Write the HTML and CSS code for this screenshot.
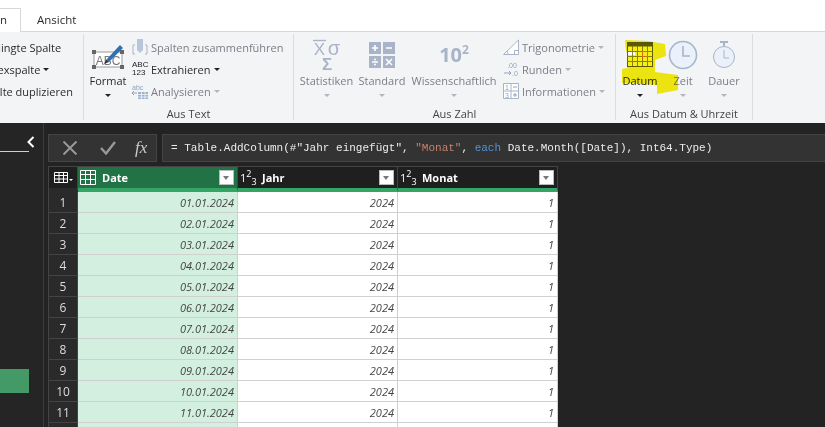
FILE: index.html
```html
<!DOCTYPE html>
<html lang="de">
<head>
    <meta charset="UTF-8">
    <meta name="viewport" content="width=device-width, initial-scale=1.0">
    <title>Power Query Editor</title>
    <link rel="stylesheet" href="styles.css">
</head>
<body>
    <div class="tabs">
        <div class="tab tab-active"><span>Spalte hinzufügen</span></div>
        <div class="tab">Ansicht</div>
    </div>

    <div class="ribbon">
        <!-- Allgemein, links abgeschnitten -->
        <div class="group group-general">
            <div class="group-body">
                <div class="small-list small-list-cut">
                    <div class="small-item">Bedingte Spalte</div>
                    <div class="small-item">Indexspalte <i class="caret"></i></div>
                    <div class="small-item">Spalte duplizieren</div>
                </div>
            </div>
        </div>

        <div class="group group-text">
            <div class="group-body">
                <div class="big-btn btn-format">
                    <div class="big-icon">
                        <svg width="32" height="28" viewBox="0 0 32 28">
                            <rect x="2" y="11" width="28" height="15" fill="#fff" stroke="#9a9a9a"/>
                            <rect x="0" y="9" width="4" height="4" fill="#666"/>
                            <rect x="28" y="9" width="4" height="4" fill="#666"/>
                            <rect x="0" y="24" width="4" height="4" fill="#666"/>
                            <rect x="28" y="24" width="4" height="4" fill="#666"/>
                            <text x="16" y="24" class="svg-abc">ABC</text>
                            <path d="M14 19 L28 4 L31 7 L17 21 Z" fill="#2f6fb5"/>
                            <path d="M14 19 L12 23 L17 21 Z" fill="#333"/>
                        </svg>
                    </div>
                    <div class="big-label">Format</div>
                    <i class="caret"></i>
                </div>
                <div class="small-list">
                    <div class="small-item dim">
                        <svg class="small-icon" width="16" height="16" viewBox="0 0 16 16">
                            <path d="M5 0h6v11l-3 3-3-3z" fill="#b9c6da"/>
                            <path d="M3 6H1v9h2M13 6h2v9h-2" fill="none" stroke="#a9b4c8"/>
                        </svg>
                        Spalten zusammenführen
                    </div>
                    <div class="small-item">
                        <span class="abc-icon">ABC<br>123</span>
                        Extrahieren <i class="caret"></i>
                    </div>
                    <div class="small-item dim">
                        <svg class="small-icon" width="16" height="16" viewBox="0 0 16 16">
                            <text x="0" y="7" class="svg-tiny">abc</text>
                            <path d="M0 10h5M2 8l-2 2 2 2" fill="none" stroke="#8fa3bd"/>
                            <path d="M6 9h10v7H6z" fill="#9fb2cc"/>
                            <path d="M6 11.5h10M6 14h10M9.5 9v7M13 9v7" stroke="#fff" stroke-width=".7"/>
                        </svg>
                        Analysieren <i class="caret caret-dim"></i>
                    </div>
                </div>
            </div>
            <div class="group-label">Aus Text</div>
        </div>

        <div class="group group-number">
            <div class="group-body">
                <div class="big-btn dim btn-stat">
                    <div class="big-icon">
                        <svg width="30" height="32" viewBox="0 0 30 32">
                            <path d="M1 1.500h13" stroke="#a9b4c8" stroke-width="1.400"/>
                            <text x="7.500" y="16" class="svg-stat">X</text>
                            <text x="22" y="16" class="svg-stat svg-sigma">σ</text>
                            <text x="15" y="31" class="svg-sum">Σ</text>
                        </svg>
                    </div>
                    <div class="big-label">Statistiken</div>
                    <i class="caret caret-dim"></i>
                </div>
                <div class="big-btn dim btn-std">
                    <div class="big-icon">
                        <svg width="26" height="26" viewBox="0 0 26 26">
                            <rect width="12" height="12" fill="#a9b4c8"/>
                            <rect x="14" width="12" height="12" fill="#a9b4c8"/>
                            <rect y="14" width="12" height="12" fill="#a9b4c8"/>
                            <rect x="14" y="14" width="12" height="12" fill="#a9b4c8"/>
                            <path d="M3 6h6M6 3v6M17 6h6M3 20h6M17 17l6 6M23 17l-6 6" stroke="#fff" stroke-width="1.600"/>
                            <circle cx="6" cy="17.500" r="1" fill="#fff"/>
                            <circle cx="6" cy="22.500" r="1" fill="#fff"/>
                        </svg>
                    </div>
                    <div class="big-label">Standard</div>
                    <i class="caret caret-dim"></i>
                </div>
                <div class="big-btn dim btn-sci">
                    <div class="big-icon">
                        <span class="power">10<sup>2</sup></span>
                    </div>
                    <div class="big-label">Wissenschaftlich</div>
                    <i class="caret caret-dim"></i>
                </div>
                <div class="small-list">
                    <div class="small-item dim">
                        <svg class="small-icon" width="16" height="16" viewBox="0 0 16 16">
                            <path d="M.5 15.500L15.500 1v14.500z" fill="#fff" stroke="#a9b4c8"/>
                            <path d="M11.500 15.500v-4h4" fill="none" stroke="#a9b4c8"/>
                            <path d="M5 15a4 4 0 0 0-1-3" fill="none" stroke="#a9b4c8"/>
                        </svg>
                        Trigonometrie <i class="caret caret-dim"></i>
                    </div>
                    <div class="small-item dim">
                        <svg class="small-icon" width="16" height="16" viewBox="0 0 16 16">
                            <text x="9" y="7" class="svg-tiny svg-mid">.00</text>
                            <text x="12" y="15" class="svg-tiny svg-mid">.0</text>
                            <path d="M1 12h7M6 10l2 2-2 2" fill="none" stroke="#8fa3bd"/>
                        </svg>
                        Runden <i class="caret caret-dim"></i>
                    </div>
                    <div class="small-item dim">
                        <svg class="small-icon" width="16" height="16" viewBox="0 0 16 16">
                            <path d="M.5 .5h15v15H.5zM8 .5v15M.5 8h15" fill="#fff" stroke="#a9b4c8"/>
                            <path d="M10 4h4M10 12h4M12 10v4" stroke="#8fa3bd"/>
                            <text x="4" y="7" class="svg-tiny svg-mid">1</text>
                            <text x="4" y="15" class="svg-tiny svg-mid">3</text>
                        </svg>
                        Informationen <i class="caret caret-dim"></i>
                    </div>
                </div>
            </div>
            <div class="group-label">Aus Zahl</div>
        </div>

        <div class="group group-date">
            <div class="group-body">
                <div class="big-btn btn-datum">
                    <div class="big-icon">
                        <svg width="26" height="25" viewBox="0 0 26 25">
                            <rect x=".5" y=".5" width="25" height="24" fill="#fff" stroke="#5f5f2a"/>
                            <rect x=".5" y=".5" width="25" height="4" fill="#5f5f2a"/>
                            <path d="M.5 9.500h25M.5 14.500h25M.5 19.500h25M5.500 4v20M10.500 4v20M15.500 4v20M20.500 4v20" stroke="#8a8a3a" fill="none"/>
                            <rect x="15.500" y="9.500" width="5" height="5" fill="#fff" stroke="#e8762a"/>
                        </svg>
                    </div>
                    <div class="big-label">Datum</div>
                    <i class="caret"></i>
                </div>
                <div class="big-btn dim btn-zeit">
                    <div class="big-icon">
                        <svg width="30" height="30" viewBox="0 0 30 30">
                            <circle cx="15" cy="15" r="13.500" fill="#eaf1fb" stroke="#a9b4c8" stroke-width="1.600"/>
                            <path d="M15 6v10h7" fill="none" stroke="#a9b4c8" stroke-width="1.600"/>
                        </svg>
                    </div>
                    <div class="big-label">Zeit</div>
                    <i class="caret caret-dim"></i>
                </div>
                <div class="big-btn dim btn-dauer">
                    <div class="big-icon">
                        <svg width="24" height="28" viewBox="0 0 24 28">
                            <path d="M8 1h8M12 1v4" stroke="#a9b4c8" stroke-width="2"/>
                            <circle cx="12" cy="16" r="10.500" fill="#eaf1fb" stroke="#a9b4c8"/>
                            <path d="M12 9v8h5" fill="none" stroke="#a9b4c8"/>
                        </svg>
                    </div>
                    <div class="big-label">Dauer</div>
                    <i class="caret caret-dim"></i>
                </div>
            </div>
            <div class="group-label">Aus Datum &amp; Uhrzeit</div>
            <!-- Markierung über dem Datum-Button -->
            <svg class="marker" width="70" height="60" viewBox="0 0 70 60">
                <path d="M3 1L26 2L43 5L44 17L33 21L33 33L56 36L56 51L35 55L35 46L0 44L0 30L5 29L6 16L13 16L13 13L4 13Z" fill="#f7ef10"/>
            </svg>
        </div>
    </div>

    <div class="workspace">
        <div class="queries">
            <div class="queries-head">
                <div class="queries-title"></div>
                <svg class="chevron" width="8" height="12" viewBox="0 0 8 12">
                    <path d="M6.500 1L1.500 6l5 5" fill="none" stroke="#fff" stroke-width="2"/>
                </svg>
            </div>
            <div class="query-selected"></div>
        </div>

        <div class="main">
            <div class="formula-bar">
                <div class="formula-buttons">
                    <svg width="16" height="14" viewBox="0 0 16 14">
                        <path d="M1.500 .5l13 13M14.500 .5l-13 13" stroke="#999" stroke-width="2"/>
                    </svg>
                    <svg width="16" height="14" viewBox="0 0 16 14">
                        <path d="M1 7l5 5.500L15 1" fill="none" stroke="#999" stroke-width="2.400"/>
                    </svg>
                    <span class="fx">fx</span>
                </div>
                <div class="formula">= Table.AddColumn(#"Jahr eingefügt", <span class="str">"Monat"</span>, <span class="kw">each</span> Date.Month([Date]), Int64.Type)</div>
            </div>

            <table class="grid">
                <thead>
                    <tr>
                        <th class="corner">
                            <svg width="14" height="11" viewBox="0 0 14 11">
                                <path d="M.5 .5h13v10H.5zM.5 3.500h13M.5 7h13M5 .5v10M9.500 .5v10" fill="none" stroke="#fff"/>
                            </svg><i class="corner-caret"></i>
                        </th>
                        <th class="col-date">
                            <div class="col-head">
                                <svg width="16" height="15" viewBox="0 0 16 15">
                                    <path d="M.5 .5h15v14H.5zM.5 4.500h15M.5 9.500h15M5.500 .5v14M10.500 .5v14" fill="none" stroke="#fff"/>
                                </svg>
                                <span class="col-name">Date</span>
                                <span class="filter"></span>
                            </div>
                        </th>
                        <th>
                            <div class="col-head">
                                <span class="type-num">1<sup>2</sup><sub>3</sub></span>
                                <span class="col-name">Jahr</span>
                                <span class="filter"></span>
                            </div>
                        </th>
                        <th>
                            <div class="col-head">
                                <span class="type-num">1<sup>2</sup><sub>3</sub></span>
                                <span class="col-name">Monat</span>
                                <span class="filter"></span>
                            </div>
                        </th>
                    </tr>
                </thead>
                <tbody>
                    <tr><th>1</th><td class="col-date">01.01.2024</td><td>2024</td><td>1</td></tr>
                    <tr><th>2</th><td class="col-date">02.01.2024</td><td>2024</td><td>1</td></tr>
                    <tr><th>3</th><td class="col-date">03.01.2024</td><td>2024</td><td>1</td></tr>
                    <tr><th>4</th><td class="col-date">04.01.2024</td><td>2024</td><td>1</td></tr>
                    <tr><th>5</th><td class="col-date">05.01.2024</td><td>2024</td><td>1</td></tr>
                    <tr><th>6</th><td class="col-date">06.01.2024</td><td>2024</td><td>1</td></tr>
                    <tr><th>7</th><td class="col-date">07.01.2024</td><td>2024</td><td>1</td></tr>
                    <tr><th>8</th><td class="col-date">08.01.2024</td><td>2024</td><td>1</td></tr>
                    <tr><th>9</th><td class="col-date">09.01.2024</td><td>2024</td><td>1</td></tr>
                    <tr><th>10</th><td class="col-date">10.01.2024</td><td>2024</td><td>1</td></tr>
                    <tr><th>11</th><td class="col-date">11.01.2024</td><td>2024</td><td>1</td></tr>
                    <tr><th></th><td class="col-date"></td><td></td><td></td></tr>
                </tbody>
            </table>
        </div>
    </div>
</body>
</html>
```

FILE: styles.css
```css
html, body {
    margin: 0;
    height: 427px;
    overflow: hidden;
}

body {
    font-family: "Open Sans", "Noto Sans", sans-serif;
    font-size: 11px;
    color: #2b2b2b;
    background-color: #232323;
}

/* Tabs */
.tabs {
    display: flex;
    height: 32px;
    box-sizing: border-box;
    background-color: #fff;
    border-bottom: 1px solid #d8d8d8;
    padding-top: 8px;
}

.tab {
    padding: 0 16px;
    line-height: 24px;
    font-size: 11.5px;
}

.tab-active {
    width: 21px;
    padding: 0;
    height: 24px;
    box-sizing: border-box;
    display: flex;
    justify-content: flex-end;
    overflow: hidden;
    white-space: nowrap;
    background-color: #fff;
    border-top: 1px solid #d8d8d8;
    border-right: 1px solid #d8d8d8;
    line-height: 22px;
}

.tab-active span {
    flex-shrink: 0;
    padding-right: 13px;
}

/* Ribbon */
.ribbon {
    display: flex;
    height: 91px;
    background-color: #f3f4f6;
}

.group {
    position: relative;
    flex-shrink: 0;
    height: 86px;
    margin-top: 2px;
    box-sizing: border-box;
    border-right: 1px solid #dcdcdc;
}

.group-general {
    width: 84px;
    overflow: hidden;
}

.group-text {
    width: 210px;
}

.group-number {
    width: 322px;
}

.group-date {
    width: 137px;
}

.group-body {
    display: flex;
    height: 70px;
    box-sizing: border-box;
    padding-top: 2px;
    margin-bottom: 2px;
}

.group-label {
    text-align: center;
    line-height: 16px;
    font-size: 11px;
    color: #444;
}

.group-text .group-body {
    padding-left: 4px;
}

.group-number .group-body {
    padding-left: 4px;
}

.group-date .group-body {
    padding-left: 2px;
}

.big-btn {
    display: flex;
    flex-direction: column;
    align-items: center;
    flex-shrink: 0;
    white-space: nowrap;
}

.big-icon {
    display: flex;
    align-items: center;
    justify-content: center;
    height: 37px;
}

.big-label {
    line-height: 16px;
    margin-bottom: 5px;
}

.btn-format { width: 40px; }
.btn-stat { width: 57px; }
.btn-std { width: 54px; }
.btn-sci { width: 90px; }
.btn-datum { width: 44px; }
.btn-zeit { width: 42px; }
.btn-dauer { width: 40px; }

.dim {
    color: #7d7d88;
}

.small-list {
    display: flex;
    flex-direction: column;
    margin-left: 4px;
}

.small-list-cut {
    margin-left: -19px;
}

.small-item {
    display: flex;
    align-items: center;
    gap: 3px;
    height: 22px;
    white-space: nowrap;
}

.small-icon {
    flex-shrink: 0;
}

.abc-icon {
    display: block;
    width: 16px;
    font-size: 8px;
    line-height: 8px;
    color: #222;
    font-family: "Liberation Sans", sans-serif;
}

.caret {
    display: inline-block;
    width: 0;
    height: 0;
    border-left: 3px solid transparent;
    border-right: 3px solid transparent;
    border-top: 3px solid #222;
}

.caret-dim {
    border-top-color: #b5b5bb;
}

.power {
    font-size: 20px;
    font-weight: 700;
    color: #a9b4c8;
    line-height: 1;
}

.power sup {
    font-size: 12px;
    line-height: 0;
}

/* Texte in den Icons */
.svg-abc {
    font-family: "Liberation Sans", sans-serif;
    font-size: 12px;
    fill: #777;
    text-anchor: middle;
}

.svg-tiny {
    font-family: "Liberation Sans", sans-serif;
    font-size: 7px;
    fill: #8fa3bd;
}

.svg-mid {
    text-anchor: middle;
}

.svg-stat {
    font-family: "Liberation Sans", sans-serif;
    font-size: 17px;
    fill: #a9b4c8;
    text-anchor: middle;
}

.svg-sigma {
    font-size: 20px;
}

.svg-sum {
    font-family: "Liberation Sans", sans-serif;
    font-size: 17px;
    font-weight: bold;
    fill: #a9b4c8;
    text-anchor: middle;
}

.marker {
    position: absolute;
    left: 6px;
    top: 5px;
    mix-blend-mode: multiply;
    pointer-events: none;
}

/* Arbeitsbereich */
.workspace {
    display: flex;
    height: 304px;
}

.queries {
    width: 43px;
    flex-shrink: 0;
    background-color: #252525;
    border-right: 1px solid #3c3c3c;
}

.queries-head {
    display: flex;
    align-items: center;
    height: 29px;
}

.queries-title {
    width: 29px;
    height: 29px;
    box-sizing: border-box;
    border-bottom: 1px solid #cfcfcf;
}

.chevron {
    margin: 8px 0 0 -2px;
}

.query-selected {
    width: 29px;
    height: 24px;
    margin-top: 217px;
    background-color: #439a66;
}

.main {
    flex: 1;
    min-width: 0;
    padding: 11px 0 0 4px;
}

.formula-bar {
    display: flex;
    gap: 5px;
    height: 28px;
    margin-bottom: 4px;
}

.formula-buttons {
    display: flex;
    align-items: center;
    gap: 22px;
    width: 109px;
    box-sizing: border-box;
    padding-left: 13px;
    background-color: #333;
    border: 1px solid #444;
}

.fx {
    font-family: "Liberation Serif", serif;
    font-style: italic;
    font-size: 17px;
    color: #ccc;
    margin-left: -3px;
}

.formula {
    flex: 1;
    padding-left: 8px;
    line-height: 26px;
    font-family: "Liberation Mono", monospace;
    font-size: 11px;
    color: #ececec;
    white-space: nowrap;
    background-color: #333;
    border: 1px solid #444;
    border-right: none;
}

.str {
    color: #c8826a;
}

.kw {
    color: #4f93d6;
}

/* Tabelle */
.grid {
    border-collapse: separate;
    border-spacing: 0;
    table-layout: fixed;
    width: 510px;
    border-top: 1px solid #444;
    border-left: 1px solid #444;
}

.grid th, .grid td {
    box-sizing: border-box;
    padding: 0;
}

.grid thead th {
    width: 160px;
    height: 25px;
    background-color: #1f1f1f;
    border-right: 1px solid #444;
    border-bottom: 4px solid #35a565;
    vertical-align: top;
    color: #fff;
    text-align: left;
}

.grid thead .corner {
    width: 29px;
    padding: 5px 0 0 5px;
    border-bottom-color: #2a2a2a;
}

.grid thead .col-date {
    background-color: #217346;
}

.corner svg {
    vertical-align: top;
}

.corner-caret {
    display: inline-block;
    margin: 7px 0 0 1px;
    vertical-align: top;
    border-left: 2px solid transparent;
    border-right: 2px solid transparent;
    border-top: 2px solid #fff;
}

.col-head {
    display: flex;
    align-items: center;
    height: 21px;
    padding: 0 3px 0 2px;
}

.col-name {
    flex: 1;
    margin-left: 6px;
    font-size: 11px;
    font-weight: 700;
}

.type-num {
    width: 16px;
    font-size: 11px;
    font-weight: 400;
    line-height: 1;
    white-space: nowrap;
}

.type-num sup, .type-num sub {
    font-size: 9px;
    line-height: 0;
}

.filter {
    position: relative;
    width: 15px;
    height: 15px;
    box-sizing: border-box;
    background-color: #fff;
    border: 1px solid #bbb;
}

.filter::after {
    content: "";
    position: absolute;
    left: 3px;
    top: 5px;
    border-left: 3.5px solid transparent;
    border-right: 3.5px solid transparent;
    border-top: 4px solid #777;
}

.grid tbody th {
    height: 21px;
    background-color: #2a2a2a;
    border-right: 1px solid #444;
    border-bottom: 1px solid #444;
    color: #ddd;
    font-size: 12px;
    font-weight: 400;
    text-align: center;
}

.grid td {
    height: 21px;
    padding-right: 3px;
    background-color: #fff;
    border-right: 1px solid #d0d0d0;
    border-bottom: 1px solid #d0d0d0;
    font-size: 11px;
    font-style: italic;
    color: #444;
    text-align: right;
}

.grid td.col-date {
    background-color: #d3efe0;
}
```
